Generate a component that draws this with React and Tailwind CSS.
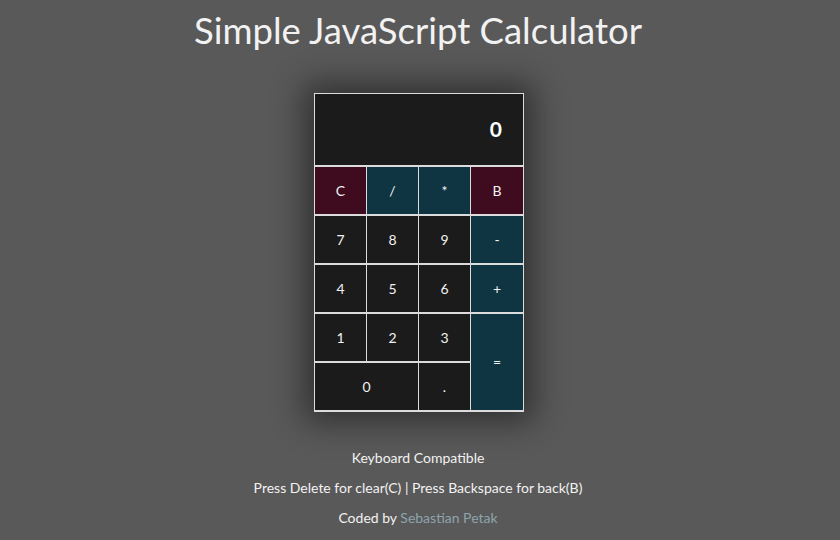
import React, { useState } from 'react';

const keys = [
  { label: 'C', kind: 'red' },
  { label: '/', kind: 'op' },
  { label: '*', kind: 'op' },
  { label: 'B', kind: 'red' },
  { label: '7' },
  { label: '8' },
  { label: '9' },
  { label: '-', kind: 'op' },
  { label: '4' },
  { label: '5' },
  { label: '6' },
  { label: '+', kind: 'op' },
  { label: '1' },
  { label: '2' },
  { label: '3' },
  { label: '=', kind: 'op', tall: true },
  { label: '0', wide: true },
  { label: '.' },
];

const kindClass = {
  red: 'bg-[#3e0b1f]',
  op: 'bg-[#0e3541]',
  num: 'bg-[#1b1b1b]',
};

export default function App() {
  const [display, setDisplay] = useState('0');

  const press = (k) => {
    if (k === 'C') return setDisplay('0');
    if (k === 'B') return setDisplay((d) => (d.length > 1 ? d.slice(0, -1) : '0'));
    if (k === '=') {
      try {
        // eslint-disable-next-line no-new-func
        setDisplay(String(Function(`return (${display})`)()));
      } catch {
        setDisplay('0');
      }
      return;
    }
    setDisplay((d) => (d === '0' && k !== '.' ? k : d + k));
  };

  return (
    <div className="min-h-screen bg-[#595959] text-[#f2f2f2] font-['Lato','Noto_Sans',sans-serif] flex flex-col items-center pr-[4px]">
      <h1 className="text-[36.5px] leading-none mt-[12px]">Simple JavaScript Calculator</h1>

      <div className="mt-[44px] ml-[2px] w-[210px] bg-[#dcdcdc] p-px pb-[2px] shadow-[0_0_30px_10px_rgba(0,0,0,0.45)]">
        <div className="h-[71px] bg-[#1b1b1b] flex items-center justify-end pr-[21px] text-[21px] font-bold text-white">
          {display}
        </div>
        <div className="mt-[2px] grid grid-cols-[51px_51px_51px_52px] auto-rows-[47px] gap-x-px gap-y-[2px]">
          {keys.map((k) => (
            <button
              key={k.label}
              onClick={() => press(k.label)}
              className={`${kindClass[k.kind || 'num']} ${k.tall ? 'row-span-2' : ''} ${
                k.wide ? 'col-span-2' : ''
              } text-[14px] text-[#f2f2f2] flex items-center justify-center`}
            >
              {k.label}
            </button>
          ))}
        </div>
      </div>

      <div className="mt-[37px] flex flex-col items-center gap-[12px] text-[14px] leading-[18px]">
        <p>Keyboard Compatible</p>
        <p>Press Delete for clear(C) | Press Backspace for back(B)</p>
        <p>
          Coded by <a className="text-[#8ea4ad]">Sebastian Petak</a>
        </p>
      </div>
    </div>
  );
}
